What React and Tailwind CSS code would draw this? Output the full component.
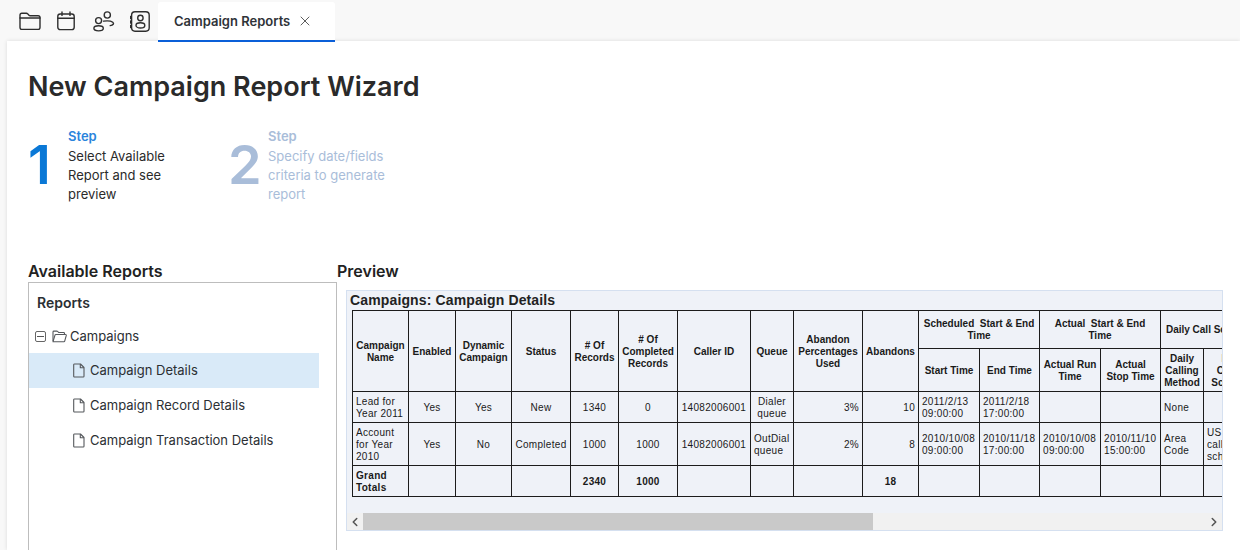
import React from 'react';
import { ChevronLeft, ChevronRight, X } from 'lucide-react';

const COLS = [56, 47, 56, 59, 48, 59, 73, 43, 69, 56, 61, 60, 61, 60, 43, 60];

const TH = 'border border-[#1c1c1c] text-center align-middle font-bold px-[2px] pt-px leading-[12px]';
const TD = 'border border-[#1c1c1c] text-center align-middle font-normal tracking-[0.3px] px-[3px] pt-px leading-[12px]';
const TL = 'border border-[#1c1c1c] text-left align-middle font-normal tracking-[0.3px] px-[3px] pt-px leading-[12px]';
const TR = 'border border-[#1c1c1c] text-right align-middle font-normal tracking-[0.3px] px-[3px] pt-px leading-[12px]';
const TB = 'border border-[#1c1c1c] text-center align-middle font-bold tracking-[0.3px] px-[3px] pt-px leading-[12px]';
const TE = 'border border-[#1c1c1c]';

function FolderIcon() {
  return (
    <svg width="22" height="18" viewBox="0 0 22 18" fill="none" stroke="#2e2e2e" strokeWidth="1.4" strokeLinejoin="round" strokeLinecap="round">
      <path d="M1 3.2C1 2 1.7 1.3 2.8 1.3h4.6c.6 0 1 .2 1.4.6l1.2 1.4c.3.4.7.5 1.2.5h7.9c1.1 0 1.9.8 1.9 1.9v9.9c0 1.1-.8 1.9-1.9 1.9H2.9c-1.1 0-1.9-.8-1.9-1.9z" />
      <path d="M1 6h20" />
    </svg>
  );
}

function CalendarIcon() {
  return (
    <svg width="18" height="20" viewBox="0 0 18 20" fill="none" stroke="#2e2e2e" strokeWidth="1.4" strokeLinecap="round" strokeLinejoin="round">
      <rect x="0.8" y="3" width="16.4" height="15.6" rx="2.4" />
      <path d="M0.8 7.2h16.4M5 1v3.4M13 1v3.4" />
    </svg>
  );
}

function PeopleIcon() {
  return (
    <svg width="22" height="21" viewBox="0 0 22 21" fill="none" stroke="#2e2e2e" strokeWidth="1.4" strokeLinecap="round">
      <circle cx="14.3" cy="4" r="3.1" />
      <circle cx="5.6" cy="9.6" r="3" />
      <ellipse cx="5.6" cy="17.3" rx="4.7" ry="2.6" />
      <path d="M10.6 10.1c3.6-.4 7.5-.2 9.2 1.1 1.6 1.3.4 3.1-2.6 3.4" />
    </svg>
  );
}

function ContactIcon() {
  return (
    <svg width="20" height="21" viewBox="0 0 20 21" fill="none" stroke="#2e2e2e" strokeWidth="1.4" strokeLinecap="round">
      <rect x="1.6" y="0.8" width="17.6" height="19.4" rx="3.4" />
      <circle cx="10.4" cy="7" r="2.7" />
      <ellipse cx="10.4" cy="14.4" rx="4.4" ry="2.6" />
      <path d="M0.6 5.5v2M0.6 10v2M0.6 14.5v2" />
    </svg>
  );
}

function FileIcon() {
  return (
    <svg width="12" height="15" viewBox="0 0 12 15" fill="none" stroke="#55585c" strokeWidth="1.1" strokeLinejoin="round">
      <path d="M1.5 1h6l3.5 3.5v8.7c0 .5-.4.8-.8.8H1.5c-.4 0-.8-.3-.8-.8V1.8c0-.5.4-.8.8-.8z" />
      <path d="M7.3 1v3.7H11" />
    </svg>
  );
}

function OpenFolderIcon() {
  return (
    <svg width="15" height="13" viewBox="0 0 15 13" fill="none" stroke="#55585c" strokeWidth="1.1" strokeLinejoin="round">
      <path d="M1 11V2c0-.5.4-.9.9-.9h3c.3 0 .5.1.7.3l1 1.1h5c.5 0 .9.4.9.9v1.2" />
      <path d="M1 11.7l2-6.6c.1-.4.4-.6.8-.6h9.8c.5 0 .8.4.7.9l-1.6 5.7c-.1.4-.4.6-.8.6H1z" />
    </svg>
  );
}

function TreeLeaf({ label, active }) {
  return (
    <div className={`flex h-[35px] w-[290px] items-center gap-[5px] pl-[44px] ${active ? 'bg-[#d9eaf8]' : ''}`}>
      <FileIcon />
      <span className="text-[13px] text-[#2b2f33]">{label}</span>
    </div>
  );
}

function Step({ num, title, lines, muted, width }) {
  return (
    <div className={`flex ${width}`}>
      <div className={`w-[40px] pt-[10px] text-[54px] leading-[56px] font-semibold ${muted ? 'text-[#a9bdd9]' : 'text-[#0a78d6]'}`}>{num}</div>
      <div className="text-[13px] leading-[19px]">
        <div className={`mb-px font-semibold ${muted ? 'text-[#a9bdd9]' : 'text-[#2a84dc]'}`}>{title}</div>
        {lines.map(l => (
          <div key={l} className={muted ? 'text-[#a9bdd9]' : 'text-[#2b2b2b]'}>{l}</div>
        ))}
      </div>
    </div>
  );
}

function ReportTable() {
  return (
    <table className="table-fixed border-collapse w-[911px] text-[10px] text-[#1a1a1a] font-['Liberation_Sans',Arial,sans-serif]">
      <colgroup>
        {COLS.map((w, i) => <col key={i} style={{ width: w }} />)}
      </colgroup>
      <tbody>
        <tr className="h-[38px]">
          <th rowSpan={2} className={TH}>Campaign Name</th>
          <th rowSpan={2} className={TH}>Enabled</th>
          <th rowSpan={2} className={TH}>Dynamic Campaign</th>
          <th rowSpan={2} className={TH}>Status</th>
          <th rowSpan={2} className={TH}># Of Records</th>
          <th rowSpan={2} className={TH}># Of Completed Records</th>
          <th rowSpan={2} className={TH}>Caller ID</th>
          <th rowSpan={2} className={TH}>Queue</th>
          <th rowSpan={2} className={TH}>Abandon Percentages Used</th>
          <th rowSpan={2} className={TH}>Abandons</th>
          <th colSpan={2} className={TH}>Scheduled&nbsp; Start &amp; End Time</th>
          <th colSpan={2} className={TH}>Actual&nbsp; Start &amp; End Time</th>
          <th colSpan={2} className={TH}>Daily Call Schedule</th>
        </tr>
        <tr className="h-[43px]">
          <th className={TH}>Start Time</th>
          <th className={TH}>End Time</th>
          <th className={TH}>Actual Run Time</th>
          <th className={TH}>Actual Stop Time</th>
          <th className={TH}>Daily Calling Method</th>
          <th className={TH}>Daily Calling Schedule</th>
        </tr>
        <tr className="h-[31px]">
          <td className={TL}>Lead for Year 2011</td>
          <td className={TD}>Yes</td>
          <td className={TD}>Yes</td>
          <td className={TD}>New</td>
          <td className={TD}>1340</td>
          <td className={TD}>0</td>
          <td className={TD}>14082006001</td>
          <td className={TD}>Dialer queue</td>
          <td className={TR}>3%</td>
          <td className={TR}>10</td>
          <td className={TL}>2011/2/13 09:00:00</td>
          <td className={TL}>2011/2/18 17:00:00</td>
          <td className={TE} />
          <td className={TE} />
          <td className={TL}>None</td>
          <td className={TE} />
        </tr>
        <tr className="h-[43px]">
          <td className={TL}>Account for Year 2010</td>
          <td className={TD}>Yes</td>
          <td className={TD}>No</td>
          <td className={TD}>Completed</td>
          <td className={TD}>1000</td>
          <td className={TD}>1000</td>
          <td className={TD}>14082006001</td>
          <td className={TL}>OutDial queue</td>
          <td className={TR}>2%</td>
          <td className={TR}>8</td>
          <td className={TL}>2010/10/08 09:00:00</td>
          <td className={TL}>2010/11/18 17:00:00</td>
          <td className={TL}>2010/10/08 09:00:00</td>
          <td className={TL}>2010/11/10 15:00:00</td>
          <td className={TL}>Area Code</td>
          <td className={TL}>US<br />calling<br />schedule</td>
        </tr>
        <tr className="h-[31px]">
          <td className="border border-[#1c1c1c] text-left align-middle font-bold tracking-[0.3px] px-[3px] pt-px leading-[12px]">Grand Totals</td>
          <td className={TE} />
          <td className={TE} />
          <td className={TE} />
          <td className={TB}>2340</td>
          <td className={TB}>1000</td>
          <td className={TE} />
          <td className={TE} />
          <td className={TE} />
          <td className={TB}>18</td>
          <td className={TE} />
          <td className={TE} />
          <td className={TE} />
          <td className={TE} />
          <td className={TE} />
          <td className={TE} />
        </tr>
      </tbody>
    </table>
  );
}

export default function App() {
  return (
    <div className="h-[550px] w-[1240px] overflow-hidden bg-[#f8f8f8] font-['Inter',sans-serif] text-[#2b2b2b]">
      {/* Top bar */}
      <div className="relative z-10 flex h-[42px] items-start pt-[2px]">
        <div className="flex h-[38px] w-[158px] items-center pl-[19px]">
          <FolderIcon />
          <div className="ml-[16px]"><CalendarIcon /></div>
          <div className="ml-[18px]"><PeopleIcon /></div>
          <div className="ml-[15px]"><ContactIcon /></div>
        </div>
        <div className="flex h-[40px] w-[177px] items-center gap-[7px] rounded-t-[3px] border-b-2 border-[#0a5fd8] bg-white pl-[16px]">
          <span className="pt-[2px] text-[13px] font-semibold text-[#2f3338]">Campaign Reports</span>
          <X size={16} strokeWidth={1.2} className="text-[#333]" />
        </div>
      </div>

      {/* Main panel */}
      <div className="-mt-px ml-[7px] h-[509px] bg-white pl-[21px] shadow-[0_0_4px_rgba(0,0,0,0.12)]">
        <h1 className="pt-[29px] text-[27px] leading-[34px] font-semibold text-[#2a2a2a]">New Campaign Report Wizard</h1>

        <div className="mt-[23px] flex h-[134px]">
          <Step num="1" title="Step" lines={['Select Available', 'Report and see', 'preview']} width="w-[200px]" />
          <Step num="2" title="Step" lines={['Specify date/fields', 'criteria to generate', 'report']} muted width="w-[200px]" />
        </div>

        <div className="flex">
          {/* Tree */}
          <div className="w-[309px] shrink-0">
            <h2 className="text-[16px] leading-[21px] font-semibold text-[#222]">Available Reports</h2>
            <div className="h-[300px] border border-[#bdbdbd]">
              <div className="pt-[11px] pl-[8px] text-[14px] leading-[17px] font-semibold text-[#2b2f33]">Reports</div>
              <div className="mt-[17px] flex h-[17px] items-center pl-[6px]">
                <span className="flex h-[11px] w-[11px] items-center justify-center rounded-[2px] border border-[#666]">
                  <span className="h-px w-[7px] bg-[#555]" />
                </span>
                <span className="ml-[6px]"><OpenFolderIcon /></span>
                <span className="ml-[3px] text-[13px] text-[#2b2f33]">Campaigns</span>
              </div>
              <div className="mt-[8px]">
                <TreeLeaf label="Campaign Details" active />
                <TreeLeaf label="Campaign Record Details" />
                <TreeLeaf label="Campaign Transaction Details" />
              </div>
            </div>
          </div>

          {/* Preview */}
          <div className="w-[886px] shrink-0">
            <h2 className="text-[16px] leading-[20px] font-semibold text-[#222]">Preview</h2>
            <div className="mt-[9px] ml-[9px] flex h-[241px] w-[877px] flex-col border border-[#d5e0f0] bg-[#eff2f8]">
              <div className="flex-1 overflow-hidden pl-[3px]">
                <div className="h-[19px] text-[14px] leading-[18px] font-bold tracking-[0.14px] text-[#222] font-['Liberation_Sans',Arial,sans-serif]">Campaigns: Campaign Details</div>
                <div className="pl-[2px]"><ReportTable /></div>
              </div>
              <div className="flex h-[17px] items-center bg-[#f1f1f1]">
                <div className="flex w-[16px] justify-center"><ChevronLeft size={14} strokeWidth={2.6} className="text-[#555]" /></div>
                <div className="h-full w-[510px] bg-[#c9c9c9]" />
                <div className="flex flex-1 justify-end pr-[1px]"><ChevronRight size={14} strokeWidth={2.6} className="text-[#555]" /></div>
              </div>
            </div>
          </div>
        </div>
      </div>
    </div>
  );
}
